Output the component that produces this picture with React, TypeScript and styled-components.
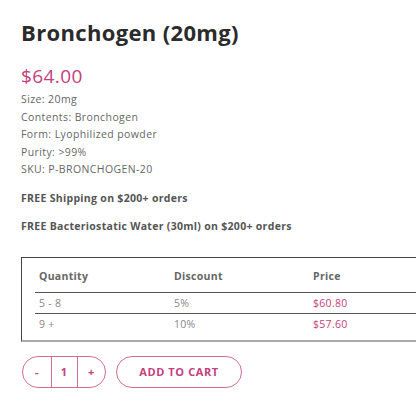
import React from "react";
import styled, { createGlobalStyle } from "styled-components";

const Global = createGlobalStyle`
  html, body { margin: 0; padding: 0; background: #fff; }
  body { font-family: "Open Sans", "Liberation Sans", sans-serif; color: #333; }
  * { box-sizing: border-box; }
`;

const PINK = "#c4407f";
const BORDER_PINK = "#cf6b98";

const Page = styled.div`
  width: 416px;
  height: 416px;
  overflow: hidden;
  padding: 17px 0 0 21px;
`;

const Title = styled.h1`
  margin: 0;
  font-size: 22px;
  font-weight: 700;
  line-height: 30px;
  color: #2b2b2b;
  letter-spacing: 0.35px;
`;

const Price = styled.div`
  margin-top: 18px;
  font-size: 19px;
  font-weight: 500;
  color: ${PINK};
  line-height: 22px;
  letter-spacing: 0.4px;
`;

const Specs = styled.div`
  margin-top: 4px;
  display: flex;
  flex-direction: column;
`;

const Spec = styled.div`
  font-size: 10.5px;
  line-height: 17.5px;
  color: #666;
  letter-spacing: 0.4px;
`;

const Note = styled.div<{ $top: number }>`
  margin-top: ${(p) => p.$top}px;
  font-size: 10.5px;
  font-weight: 700;
  line-height: 16px;
  color: #555;
  letter-spacing: 0.3px;
`;

const TableBox = styled.div`
  margin-top: 23px;
  border: 1px solid #444;
  border-right: none;
  border-bottom: 2px solid #aaa;
  padding: 3px 0 5px 13px;
`;

const Row = styled.div<{ $head?: boolean }>`
  display: grid;
  grid-template-columns: 135px 139px 1fr;
  align-items: center;
  height: ${(p) => (p.$head ? 32 : 21)}px;
  border-bottom: 1px solid #555;
  padding-left: 4px;
  &:last-child { border-bottom: none; }
`;

const Cell = styled.div<{ $head?: boolean; $pink?: boolean }>`
  font-size: 10.5px;
  font-weight: ${(p) => (p.$head ? 700 : 400)};
  color: ${(p) => (p.$pink ? PINK : p.$head ? "#666" : "#888")};
  letter-spacing: 0.3px;
`;

const Actions = styled.div`
  margin-top: 14px;
  display: flex;
  gap: 10px;
`;

const Stepper = styled.div`
  display: flex;
  height: 32px;
  width: 84px;
  margin-left: 1px;
  border: 1.5px solid ${BORDER_PINK};
  border-radius: 16px;
  overflow: hidden;
`;

const StepBtn = styled.div<{ $mid?: boolean }>`
  flex: ${(p) => (p.$mid ? "0 0 27px" : "1")};
  display: flex;
  align-items: center;
  justify-content: center;
  font-size: 11px;
  font-weight: 700;
  color: ${PINK};
  ${(p) => (p.$mid ? `border-left: 1.5px solid ${BORDER_PINK}; border-right: 1.5px solid ${BORDER_PINK};` : "")}
`;

const CartBtn = styled.button`
  height: 32px;
  width: 126px;
  border: 1.5px solid ${BORDER_PINK};
  border-radius: 16px;
  background: #fff;
  color: ${PINK};
  font-family: inherit;
  font-size: 11px;
  font-weight: 700;
  letter-spacing: 0.6px;
  padding: 0;
`;

export default function App() {
  return (
    <Page>
      <Global />
      <Title>Bronchogen (20mg)</Title>
      <Price>$64.00</Price>
      <Specs>
        <Spec>Size: 20mg</Spec>
        <Spec>Contents: Bronchogen</Spec>
        <Spec>Form: Lyophilized powder</Spec>
        <Spec>Purity: &gt;99%</Spec>
        <Spec>SKU: P-BRONCHOGEN-20</Spec>
      </Specs>
      <Note $top={11}>FREE Shipping on $200+ orders</Note>
      <Note $top={12}>FREE Bacteriostatic Water (30ml) on $200+ orders</Note>
      <TableBox>
        <Row $head>
          <Cell $head>Quantity</Cell>
          <Cell $head>Discount</Cell>
          <Cell $head>Price</Cell>
        </Row>
        <Row>
          <Cell>5 - 8</Cell>
          <Cell>5%</Cell>
          <Cell $pink>$60.80</Cell>
        </Row>
        <Row>
          <Cell>9 +</Cell>
          <Cell>10%</Cell>
          <Cell $pink>$57.60</Cell>
        </Row>
      </TableBox>
      <Actions>
        <Stepper>
          <StepBtn>-</StepBtn>
          <StepBtn $mid>1</StepBtn>
          <StepBtn>+</StepBtn>
        </Stepper>
        <CartBtn>ADD TO CART</CartBtn>
      </Actions>
    </Page>
  );
}
